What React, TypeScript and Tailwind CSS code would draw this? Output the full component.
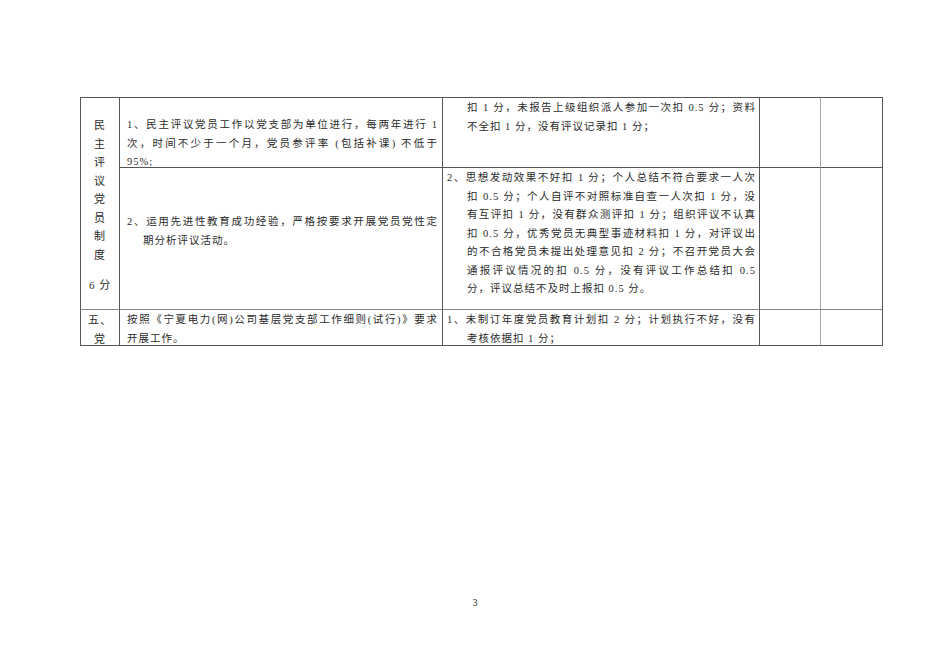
const font = { fontFamily: '"Liberation Serif", "Noto Sans CJK SC", serif' }

type Line = { text: string; indent?: number; justify?: boolean }

function Lines({ lines }: { lines: Line[] }) {
  return (
    <>
      {lines.map((l, i) => (
        <div
          key={i}
          className={
            "whitespace-nowrap " + (l.justify ? "[text-align-last:justify] text-justify" : "text-left")
          }
          style={l.indent ? { paddingLeft: l.indent } : undefined}
        >
          {l.text}
        </div>
      ))}
    </>
  )
}

const c2r1: Line[] = [
  { text: "1、民主评议党员工作以党支部为单位进行，每两年进行 1", justify: true },
  { text: "次，时间不少于一个月，党员参评率 (包括补课) 不低于", justify: true },
  { text: "95%;" },
]
const c2r2: Line[] = [
  { text: "2、运用先进性教育成功经验，严格按要求开展党员党性定", justify: true },
  { text: "期分析评议活动。", indent: 16 },
]
const c2r3: Line[] = [
  { text: "按照《宁夏电力(网)公司基层党支部工作细则(试行)》要求", justify: true },
  { text: "开展工作。" },
]
const c3r1: Line[] = [
  { text: "扣 1 分，未报告上级组织派人参加一次扣 0.5 分；资料", indent: 20, justify: true },
  { text: "不全扣 1 分，没有评议记录扣 1 分；", indent: 20 },
]
const c3r2: Line[] = [
  { text: "2、思想发动效果不好扣 1 分；个人总结不符合要求一人次", justify: true },
  { text: "扣 0.5 分；个人自评不对照标准自查一人次扣 1 分，没", indent: 20, justify: true },
  { text: "有互评扣 1 分，没有群众测评扣 1 分；组织评议不认真", indent: 20, justify: true },
  { text: "扣 0.5 分，优秀党员无典型事迹材料扣 1 分，对评议出", indent: 20, justify: true },
  { text: "的不合格党员未提出处理意见扣 2 分；不召开党员大会", indent: 20, justify: true },
  { text: "通报评议情况的扣 0.5 分，没有评议工作总结扣 0.5", indent: 20, justify: true },
  { text: "分，评议总结不及时上报扣 0.5 分。", indent: 20 },
]
const c3r3: Line[] = [
  { text: "1、未制订年度党员教育计划扣 2 分；计划执行不好，没有", justify: true },
  { text: "考核依据扣 1 分；", indent: 20 },
]

export default function App() {
  return (
    <div className="w-[950px] h-[672px] bg-white text-[#2a2a2a] text-[10.5px] leading-[18.5px] tracking-[1px]" style={font}>
      <div className="pt-[97px] pl-[80px]">
        <div className="grid w-[803px] grid-cols-[39px_323px_317px_61px_62px] grid-rows-[70px_142px_36px] border-r border-b border-[#555]">
          {/* column 1, rows 1-2 */}
          <div className="row-span-2 border-l border-t border-[#555] flex flex-col items-center pt-[18px] text-[11px]">
            {"民主评议党员制度".split("").map((ch, i) => (
              <div key={i}>{ch}</div>
            ))}
            <div className="mt-[12px]">6 分</div>
          </div>
          <div className="border-l border-t border-[#555] pl-[7px] pr-[4px] pt-[18px]">
            <Lines lines={c2r1} />
          </div>
          <div className="border-l border-t border-[#555] pl-[4px] pr-[3px] pt-[1px]">
            <Lines lines={c3r1} />
          </div>
          <div className="border-l border-t border-[#555]" />
          <div className="border-l border-t border-l-[#a8a8a8] border-t-[#555]" />

          <div className="border-l border-t border-[#555] pl-[7px] pr-[4px] pt-[45px]">
            <Lines lines={c2r2} />
          </div>
          <div className="border-l border-t border-[#555] pl-[4px] pr-[3px] pt-[1px]">
            <Lines lines={c3r2} />
          </div>
          <div className="border-l border-t border-[#555]" />
          <div className="border-l border-t border-l-[#a8a8a8] border-t-[#555]" />

          {/* row 3 */}
          <div className="border-l border-t border-l-[#555] border-t-[#888] overflow-hidden flex flex-col items-center pt-[1px] text-[11px]">
            <div>五、</div>
            <div>党</div>
          </div>
          <div className="border-l border-t border-l-[#555] border-t-[#888] overflow-hidden pl-[7px] pr-[4px] pt-[1px]">
            <Lines lines={c2r3} />
          </div>
          <div className="border-l border-t border-l-[#555] border-t-[#888] overflow-hidden pl-[4px] pr-[3px] pt-[1px]">
            <Lines lines={c3r3} />
          </div>
          <div className="border-l border-t border-l-[#555] border-t-[#888]" />
          <div className="border-l border-t border-l-[#a8a8a8] border-t-[#888]" />
        </div>
      </div>
      <div className="mt-[251px] text-center text-[10px] leading-[12px] tracking-normal">3</div>
    </div>
  )
}
